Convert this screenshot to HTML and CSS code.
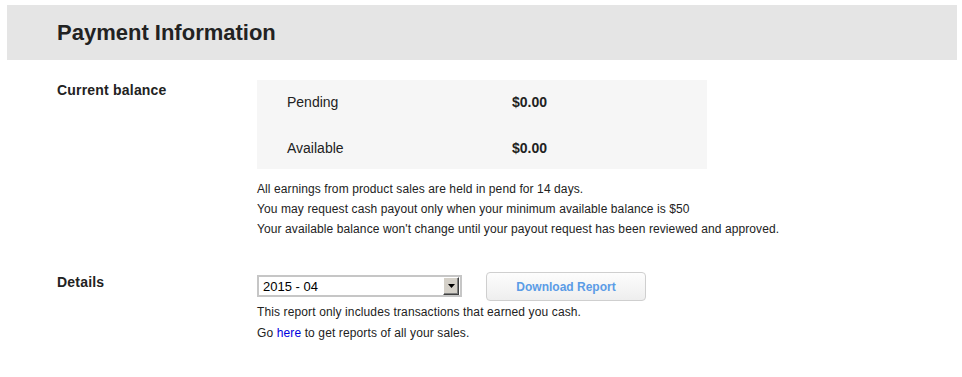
FILE: index.html
```html
<!DOCTYPE html>
<html lang="en">
<head>
  <meta charset="UTF-8" />
  <meta name="viewport" content="width=device-width, initial-scale=1.0"/>
  <title>Payment Information</title>
  <link rel="stylesheet" href="styles.css">
</head>
<body>

  <div class="page">
    <!-- Cabeçalho -->
    <div class="page-header">
      <h1 class="page-title">Payment Information</h1>
    </div>

    <!-- Saldo atual -->
    <div class="info-row balance-row">
      <div class="info-label">Current balance</div>
      <div class="info-body">
        <div class="balance-box">
          <div class="balance-line">
            <span class="balance-name">Pending</span>
            <span class="balance-value">$0.00</span>
          </div>
          <div class="balance-line">
            <span class="balance-name">Available</span>
            <span class="balance-value">$0.00</span>
          </div>
        </div>
        <div class="notes">
          <p>All earnings from product sales are held in pend for 14 days.</p>
          <p>You may request cash payout only when your minimum available balance is $50</p>
          <p>Your available balance won't change until your payout request has been reviewed and approved.</p>
        </div>
      </div>
    </div>

    <!-- Relatório -->
    <div class="info-row details-row">
      <div class="info-label">Details</div>
      <div class="info-body">
        <div class="report-controls">
          <div class="month-select">
            <select class="month-input">
              <option>2015 - 04</option>
              <option>2015 - 03</option>
              <option>2015 - 02</option>
            </select>
            <span class="select-arrow">
              <svg width="7" height="4" viewBox="0 0 7 4"><path d="M0 0H7L3.5 4Z" fill="#000"/></svg>
            </span>
          </div>
          <button class="download-btn">Download Report</button>
        </div>
        <div class="report-notes">
          <p>This report only includes transactions that earned you cash.</p>
          <p>Go <a href="#">here</a> to get reports of all your sales.</p>
        </div>
      </div>
    </div>
  </div>

</body>
</html>
```

FILE: styles.css
```css
* {
  margin: 0;
  padding: 0;
  box-sizing: border-box;
}
body {
  font-family: Arial, "Liberation Sans", sans-serif;
  background-color: #fff;
  color: #222;
}

.page {
  padding: 5px 5px 0 7px;
}

/* Cabeçalho cinza */
.page-header {
  background-color: #e5e5e5;
  height: 55px;
  padding-left: 50px;
  padding-top: 1px;
  display: flex;
  align-items: center;
}
.page-title {
  font-size: 22px;
  font-weight: bold;
  color: #222;
}

/* Linhas label + conteúdo */
.info-row {
  display: flex;
  padding-left: 50px;
}
.balance-row {
  margin-top: 20px;
}
.details-row {
  margin-top: 33px;
}
.info-label {
  width: 200px;
  flex-shrink: 0;
  font-size: 14px;
  font-weight: bold;
  line-height: 20px;
  letter-spacing: 0.2px;
}

/* Caixa de saldo */
.balance-box {
  width: 450px;
  background-color: #f6f6f6;
  padding: 12px 0 11px 30px;
  display: flex;
  flex-direction: column;
  gap: 26px;
}
.balance-line {
  display: flex;
  font-size: 14px;
  line-height: 20px;
}
.balance-name {
  width: 225px;
}
.balance-value {
  font-weight: bold;
}

.notes {
  margin-top: 10px;
  font-size: 12px;
  line-height: 20px;
  letter-spacing: 0.1px;
}

/* Controles do relatório */
.report-controls {
  display: flex;
  align-items: flex-start;
  gap: 24px;
}
.month-select {
  position: relative;
  width: 205px;
  height: 22px;
  margin-top: 3px;
}
.month-input {
  appearance: none;
  -webkit-appearance: none;
  width: 100%;
  height: 100%;
  border: 2px solid #c6c6c6;
  border-radius: 0;
  background: #fff;
  font-family: Arial, "Liberation Sans", sans-serif;
  font-size: 13px;
  color: #000;
  padding: 0 0 0 4px;
  outline: none;
}
.select-arrow {
  position: absolute;
  top: 2px;
  right: 3px;
  width: 16px;
  height: 18px;
  background: #d4d0c8;
  border: 1px solid;
  border-color: #fff #404040 #404040 #fff;
  box-shadow: inset -1px -1px 0 #808080;
  display: flex;
  align-items: center;
  justify-content: center;
  pointer-events: none;
}

.download-btn {
  width: 160px;
  height: 29px;
  border: 1px solid #cfcfcf;
  border-radius: 4px;
  background: linear-gradient(#fdfdfd, #eeeeee);
  font-family: Arial, "Liberation Sans", sans-serif;
  font-size: 12px;
  font-weight: bold;
  color: #5b9ce6;
  cursor: pointer;
}

.report-notes {
  margin-top: 1px;
  font-size: 12px;
  line-height: 21px;
  letter-spacing: 0.12px;
}
.report-notes a {
  color: #0000dd;
  text-decoration: none;
}
```
